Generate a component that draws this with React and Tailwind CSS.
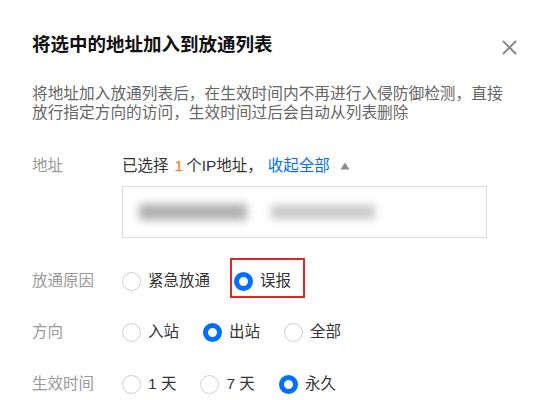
import React from "react";

function Radio({ checked }) {
  return checked ? (
    <span className="box-border block w-[19px] h-[19px] rounded-full border-[5px] border-[#006eff] bg-white shrink-0" />
  ) : (
    <span className="box-border block w-[19px] h-[19px] rounded-full border border-[#cfcfcf] bg-white shrink-0" />
  );
}

function Option({ label, checked, highlight, last }) {
  return (
    <div className={"relative flex items-center " + (last ? "" : "mr-[24px]")}>
      {highlight && (
        <div className="absolute left-[-4px] top-[-12px] w-[75px] h-[40px] border-2 border-[#e0281e]" />
      )}
      <Radio checked={checked} />
      <span className="ml-[7px] text-[15.5px] leading-[22px] text-[#333] whitespace-nowrap">{label}</span>
    </div>
  );
}

function Row({ label, children, className }) {
  return (
    <div className={"flex items-center h-[40px] " + (className || "")}>
      <div className="w-[90px] shrink-0 text-[15.5px] leading-[22px] text-[#999]">{label}</div>
      <div className="flex items-center">{children}</div>
    </div>
  );
}

export default function App() {
  return (
    <div className="w-[547px] h-[400px] bg-white overflow-hidden font-['Liberation_Sans','Noto_Sans_CJK_SC',sans-serif]">
      <div className="pl-[32px] pr-[30px] pt-[33px]">
        <div className="flex items-center justify-between h-[24px]">
          <div className="text-[18.5px] leading-[24px] font-bold text-[#111]">将选中的地址加入到放通列表</div>
          <svg width="15" height="15" viewBox="0 0 15 15" className="mt-[4px]">
            <path d="M1.5 1.5 L13.5 13.5 M13.5 1.5 L1.5 13.5" stroke="#8a8a8a" strokeWidth="2" strokeLinecap="round" />
          </svg>
        </div>
        <div className="mt-[27px] text-[15.7px] leading-[19px] text-[#666] whitespace-nowrap">
          将地址加入放通列表后，在生效时间内不再进行入侵防御检测，直接
          <br />
          放行指定方向的访问，生效时间过后会自动从列表删除
        </div>
        <div className="mt-[33px] flex items-center h-[22px]">
          <div className="w-[90px] shrink-0 text-[15.5px] leading-[22px] text-[#999]">地址</div>
          <div className="flex items-center text-[15.5px] leading-[22px] text-[#333] whitespace-nowrap">
            <span>已选择</span>
            <span className="text-[#ff7200] ml-[6px] mr-[3px]">1</span>
            <span>个IP地址，</span>
            <span className="ml-[5px] text-[#006eff]">收起全部</span>
            <svg width="10" height="8" viewBox="0 0 10 8" className="ml-[10px]">
              <path d="M5 0.5 L9.5 7.5 L0.5 7.5 Z" fill="#8c8c8c" />
            </svg>
          </div>
        </div>
        <div className="mt-[9px] ml-[90px] w-[365px] h-[52px] border border-[#dddddd] flex items-center pl-[16px]">
          <div className="flex items-center gap-[24px] blur-[4px]">
            <div className="w-[108px] h-[16px] bg-[#b0b0b0]" />
            <div className="w-[104px] h-[14px] bg-[#c8c8c8]" />
          </div>
        </div>
        <Row label="放通原因" className="mt-[23px]">
          <Option label="紧急放通" />
          <Option label="误报" checked highlight last />
        </Row>
        <Row label="方向" className="mt-[11px]">
          <Option label="入站" />
          <Option label="出站" checked />
          <Option label="全部" last />
        </Row>
        <Row label="生效时间" className="mt-[12px]">
          <Option label="1 天" />
          <Option label="7 天" />
          <Option label="永久" checked last />
        </Row>
      </div>
    </div>
  );
}
